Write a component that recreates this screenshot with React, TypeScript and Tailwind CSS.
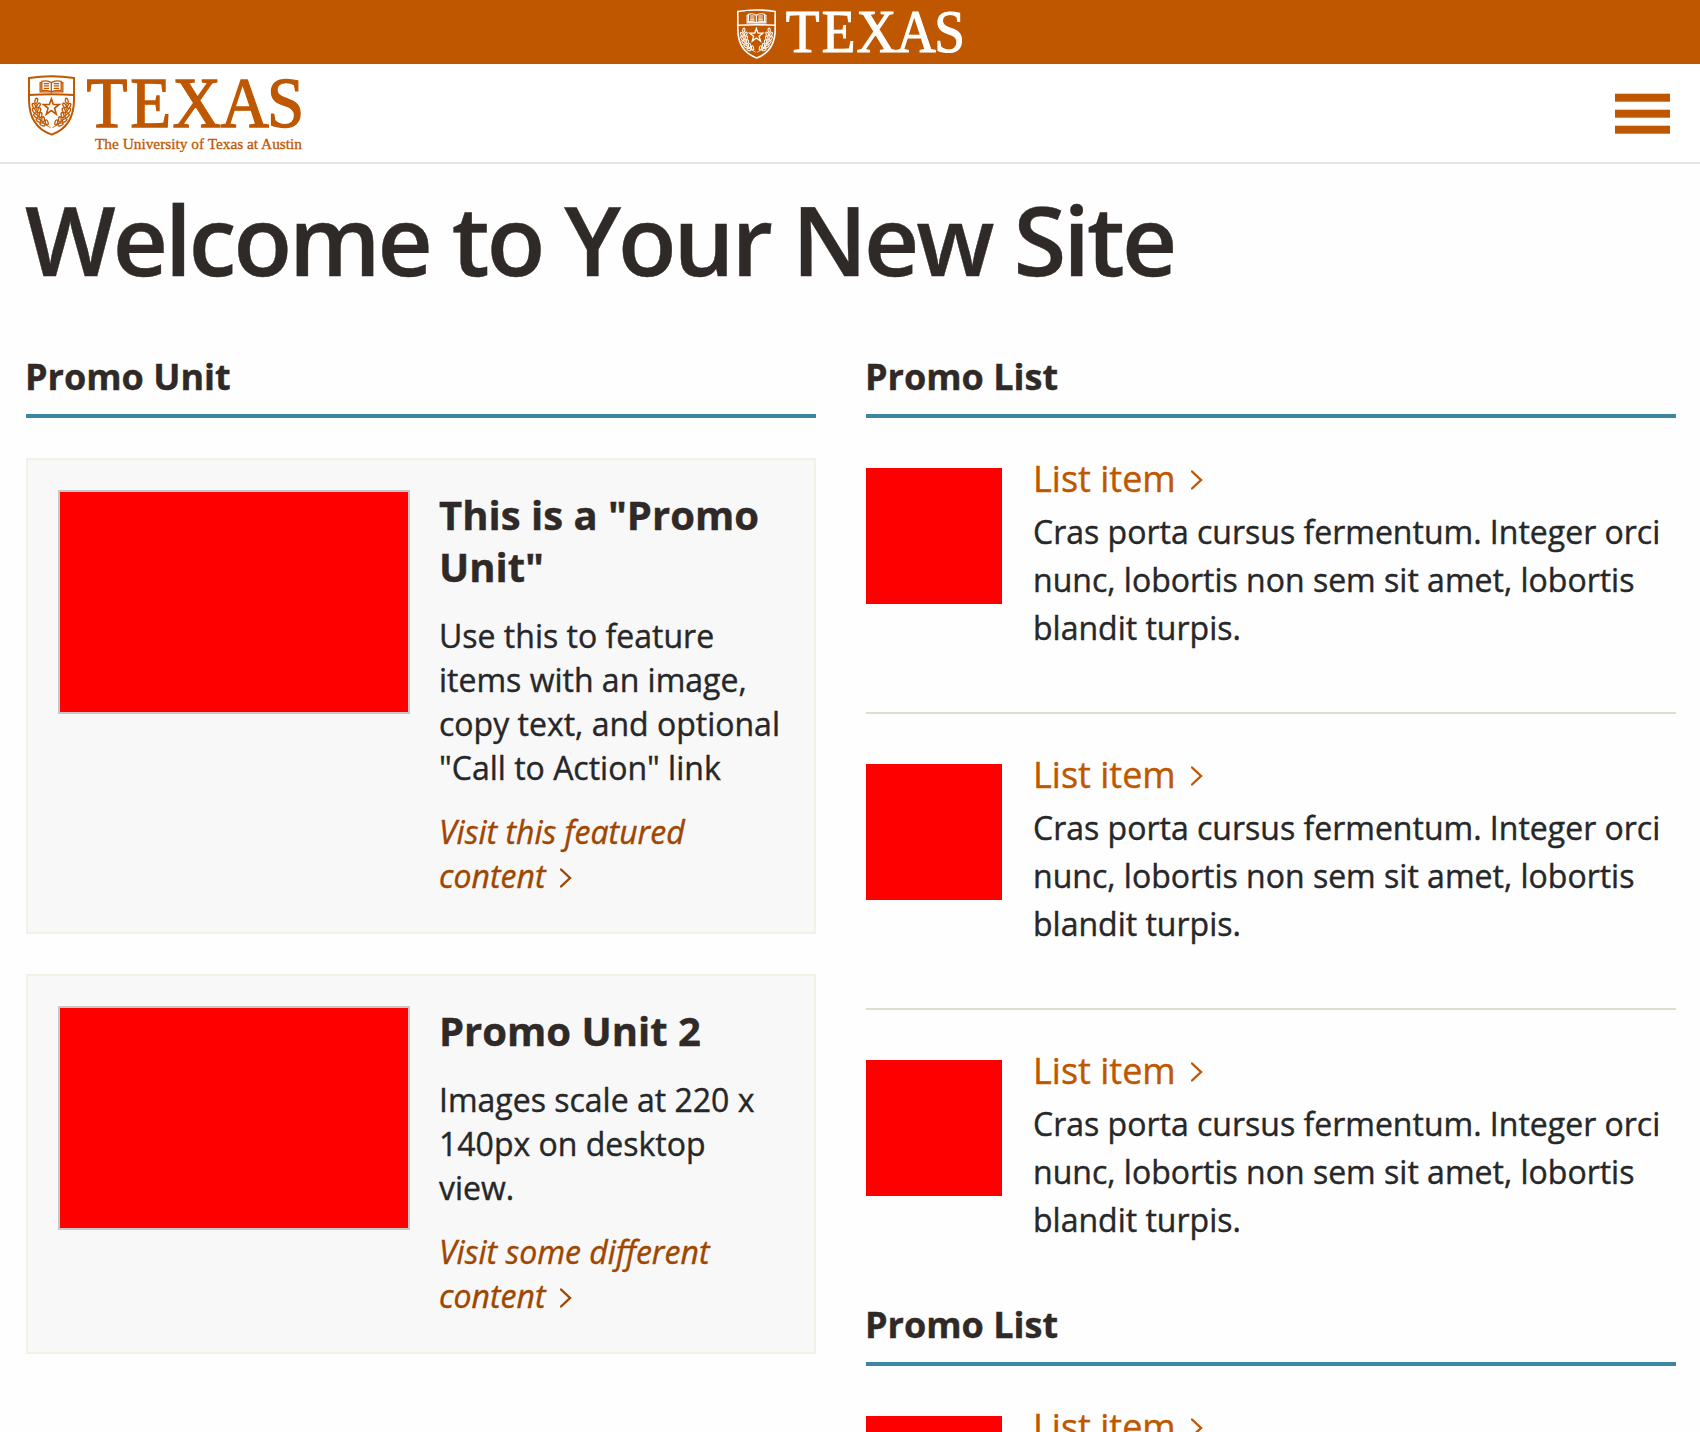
import React from "react";

const leaves: [number, number, number][] = [
  [108, 122, 10],
  [101, 137, -25],
  [115, 136, 30],
  [102, 152, -35],
  [117, 151, 22],
  [107, 167, -45],
  [121, 165, 12],
  [115, 181, -60],
  [129, 178, 0],
  [127, 193, -72],
  [140, 187, -15],
];

function Wreath() {
  return (
    <g>
      <path d="M108 130 C106 160 120 188 152 203" strokeWidth="2.5" />
      {leaves.map(([x, y, r]) => (
        <ellipse key={`${x}-${y}`} cx={x} cy={y} rx="4" ry="8" transform={`rotate(${r} ${x} ${y})`} strokeWidth="4" />
      ))}
    </g>
  );
}

function Shield({ className }: { className: string }) {
  return (
    <svg viewBox="83 44 143 184" className={className} fill="none" stroke="currentColor" preserveAspectRatio="none">
      <path d="M86 53 Q155 42 223 53 V118 C223 170 200 208 155 224 C109 208 86 170 86 118 Z" strokeWidth="6" />
      <path d="M86 104 Q155 100 223 104" strokeWidth="6" />
      <path d="M154 67 C146 61 134 61 125 63 V91 C136 90 147 90 154 95 C162 90 173 90 184 91 V63 C175 61 162 61 154 67 Z M154 67 V94" strokeWidth="4" />
      <path d="M125 67 H120 V95 H189 V67 H184" strokeWidth="4" />
      <path d="M131 70 H147 M131 77 H147 M131 84 H147 M161 70 H178 M161 77 H178 M161 84 H178" strokeWidth="3.8" />
      <path d="M154 116 L160 133 H178 L164 144 L169 162 L154 151 L139 162 L144 144 L130 133 H148 Z" strokeWidth="5" />
      <Wreath />
      <g transform="translate(309 0) scale(-1 1)">
        <Wreath />
      </g>
    </svg>
  );
}

function Wordmark({ className }: { className: string }) {
  return (
    <svg viewBox="0 0 216 52" className={`overflow-visible ${className}`} fill="currentColor" preserveAspectRatio="none">
      <text
        transform="scale(0.93 1)"
        x="-0.5 46.5 92 143.5 193.5"
        y="50"
        className="font-['Liberation_Serif',serif] text-[72px]"
        stroke="currentColor"
        strokeWidth="1.4"
      >
        TEXAS
      </text>
    </svg>
  );
}

function Chevron({ className }: { className: string }) {
  return (
    <svg viewBox="0 0 12 20" className={`relative inline-block h-5 w-3 ${className}`} fill="none" stroke="currentColor" strokeWidth="2.4">
      <path d="M1 1.5 L10 10 L1 18.5" strokeLinecap="round" />
    </svg>
  );
}

function SectionTitle({ children }: { children: React.ReactNode }) {
  return (
    <h2 className="h-[68px] border-b-4 border-[#3d86a3] text-[36px] leading-[54px] font-bold text-[#2f2a27]">
      <span className="-ml-px">{children}</span>
    </h2>
  );
}

function PromoUnit({ title, text, link }: { title: string; text: string; link: string }) {
  return (
    <article className="flex gap-[29px] border-2 border-[#f3f0e6] bg-[#f8f8f8] p-[30px]">
      <div className="h-[224px] w-[352px] shrink-0 border-2 border-[#c8c8c8] bg-[#ff0000]" />
      <div className="-mr-4 w-[347px]">
        <h3 className="-mt-px text-[40px] leading-[52px] font-bold text-[#2f2a27]">{title}</h3>
        <p className="mt-[21px] text-[32px] leading-[44px]">{text}</p>
        <p className="mt-5 mb-1 text-[32px] leading-[44px] text-[#9f4600] italic">
          {link}
          <Chevron className="-top-px ml-[15px]" />
        </p>
      </div>
    </article>
  );
}

function PromoItem() {
  return (
    <li className="flex h-[296px] gap-[31px] pt-[50px] not-last:border-b-2 not-last:border-[#dfdcd0] last:h-[288px]">
      <div className="size-[136px] shrink-0 bg-[#ff0000]" />
      <div className="-mt-2 w-[650px]">
        <h3 className="text-[36px] leading-[38px] text-[#bf5700]">
          List item
          <Chevron className="-top-0.5 ml-[15px]" />
        </h3>
        <p className="mt-[10px] text-[32px] leading-[48px]">
          Cras porta cursus fermentum. Integer orci nunc, lobortis non sem sit amet, lobortis blandit turpis.
        </p>
      </div>
    </li>
  );
}

function PromoList() {
  return (
    <section>
      <SectionTitle>Promo List</SectionTitle>
      <ul>
        <PromoItem />
        <PromoItem />
        <PromoItem />
      </ul>
    </section>
  );
}

export default function App() {
  return (
    <div className="h-[1432px] w-[1700px] overflow-hidden bg-[#fefefe] font-['Open_Sans',sans-serif] text-[#262728] [-webkit-text-stroke:0.4px]">
      <div className="flex h-16 items-start justify-center bg-[#bf5700] pt-[9px] text-white">
        <Shield className="h-[50px] w-[39px]" />
        <Wordmark className="mt-[1px] ml-[10px] h-[44px] w-[178px]" />
      </div>
      <header className="flex h-[100px] justify-between border-b-2 border-[#e9e6e1] bg-white pr-[30px] pl-7 text-[#bf5700]">
        <div className="flex pt-[11px]">
          <Shield className="h-[61px] w-[47px]" />
          <div className="ml-3">
            <Wordmark className="mt-[2px] h-[52px] w-[216px]" />
            <svg viewBox="0 0 216 24" className="h-6 w-[216px] overflow-visible" fill="currentColor">
              <text x="8" y="19.5" textLength="207" lengthAdjust="spacingAndGlyphs" className="font-['Liberation_Serif',serif] text-[15.5px]" stroke="currentColor" strokeWidth="0.3">
                The University of Texas at Austin
              </text>
            </svg>
          </div>
        </div>
        <svg viewBox="0 0 55 42" className="mt-[29px] h-[42px] w-[55px]" fill="currentColor">
          <rect y="0.7" width="55" height="8" />
          <rect y="16.7" width="55" height="8" />
          <rect y="32.7" width="55" height="8" />
        </svg>
      </header>
      <main className="pr-6 pl-[26px]">
        <h1 className="-ml-px h-[186px] pt-[11px] text-[96px] leading-[128px] font-semibold tracking-[-3.02px] text-[#2f2a27]">
          Welcome to Your New Site
        </h1>
        <div className="grid grid-cols-[790px_810px] gap-x-[50px]">
          <section>
            <SectionTitle>Promo Unit</SectionTitle>
            <div className="flex flex-col gap-10 pt-10">
              <PromoUnit
                title={'This is a "Promo Unit"'}
                text={'Use this to feature items with an image, copy text, and optional "Call to Action" link'}
                link="Visit this featured content"
              />
              <PromoUnit title="Promo Unit 2" text="Images scale at 220 x 140px on desktop view." link="Visit some different content" />
            </div>
          </section>
          <div>
            <PromoList />
            <PromoList />
          </div>
        </div>
      </main>
    </div>
  );
}
